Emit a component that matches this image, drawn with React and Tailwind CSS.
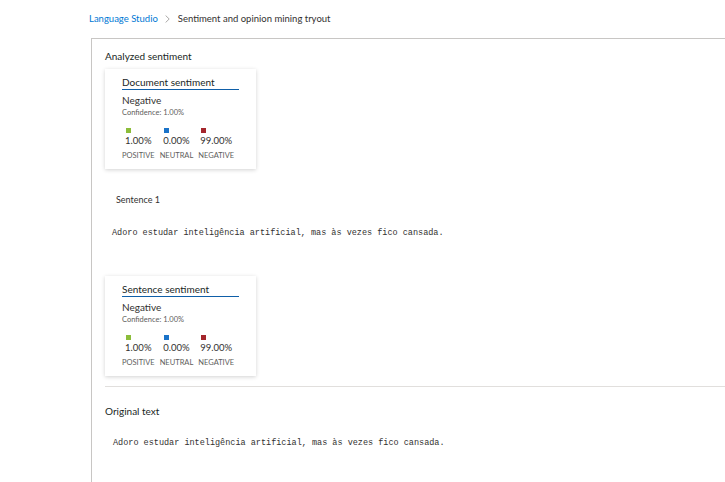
import React from "react";

const font = { fontFamily: 'Lato, "Segoe UI", "Noto Sans", sans-serif' };

function Card({ title }) {
  return (
    <div className="w-[151px] h-[100px] bg-white shadow-[0_1px_4px_rgba(0,0,0,0.18)] pl-[17px] pt-[7px]">
      <div className="w-[117px] border-b-[1.5px] border-[#0f5fa8] text-[10px] leading-[13px] text-[#201f1e]">{title}</div>
      <div className="mt-[4px] text-[10px] leading-[12px] text-[#323130]">Negative</div>
      <div className="mt-[2px] text-[7.5px] leading-[10px] text-[#605e5c]">Confidence: 1.00%</div>
      <div className="mt-[10px] flex gap-[5px] text-[#323130]">
        {[
          ["#8cbd3a", "1.00%", "POSITIVE"],
          ["#1a73c8", "0.00%", "NEUTRAL"],
          ["#a4262c", "99.00%", "NEGATIVE"],
        ].map(([c, v, l]) => (
          <div key={l} className="flex flex-col items-center">
            <div className="flex flex-col items-start">
              <div className="ml-[1px] w-[5px] h-[5px]" style={{ backgroundColor: c }} />
              <div className="mt-[2px] text-[9.5px] leading-[12px]">{v}</div>
            </div>
            <div className="mt-[4px] text-[7.5px] leading-[10px] text-[#605e5c]">{l}</div>
          </div>
        ))}
      </div>
    </div>
  );
}

const mono = { fontFamily: '"Liberation Mono", "DejaVu Sans Mono", monospace' };

export default function App() {
  return (
    <div className="w-[725px] h-[482px] overflow-hidden bg-white" style={font}>
      <div className="pl-[89px] pt-[12px] h-[38px] flex items-start text-[9.5px] leading-[14px]">
        <span className="text-[#0078d4]">Language Studio</span>
        <span className="ml-[7px] mr-[8px] h-[14px] flex items-center">
          <svg width="5" height="8" viewBox="0 0 5 8" fill="none" stroke="#a19f9d" strokeWidth="0.9">
            <path d="M0.6 0.5 L4.2 4 L0.6 7.5" />
          </svg>
        </span>
        <span className="text-[#323130]">Sentiment and opinion mining tryout</span>
      </div>
      <div className="ml-[91px] border-l border-t border-[#c8c6c4] h-[444px] pl-[13px] pt-[10px]">
        <div className="text-[10px] leading-[14px] text-[#201f1e]">Analyzed sentiment</div>
        <div className="mt-[6px]">
          <Card title="Document sentiment" />
        </div>
        <div className="mt-[25px] ml-[11px] text-[9px] leading-[12px] text-[#323130]">Sentence 1</div>
        <div className="mt-[21px] ml-[7px] text-[8.5px] leading-[12px] text-[#323130] whitespace-pre" style={mono}>
          Adoro estudar inteligência artificial, mas às vezes fico cansada.
        </div>
        <div className="mt-[37px]">
          <Card title="Sentence sentiment" />
        </div>
        <div className="mt-[10px] border-t border-[#e1dfdd]" />
        <div className="mt-[17px] text-[10px] leading-[14px] text-[#201f1e]">Original text</div>
        <div className="mt-[19px] ml-[8px] text-[8.5px] leading-[12px] text-[#323130] whitespace-pre" style={mono}>
          Adoro estudar inteligência artificial, mas às vezes fico cansada.
        </div>
      </div>
    </div>
  );
}
